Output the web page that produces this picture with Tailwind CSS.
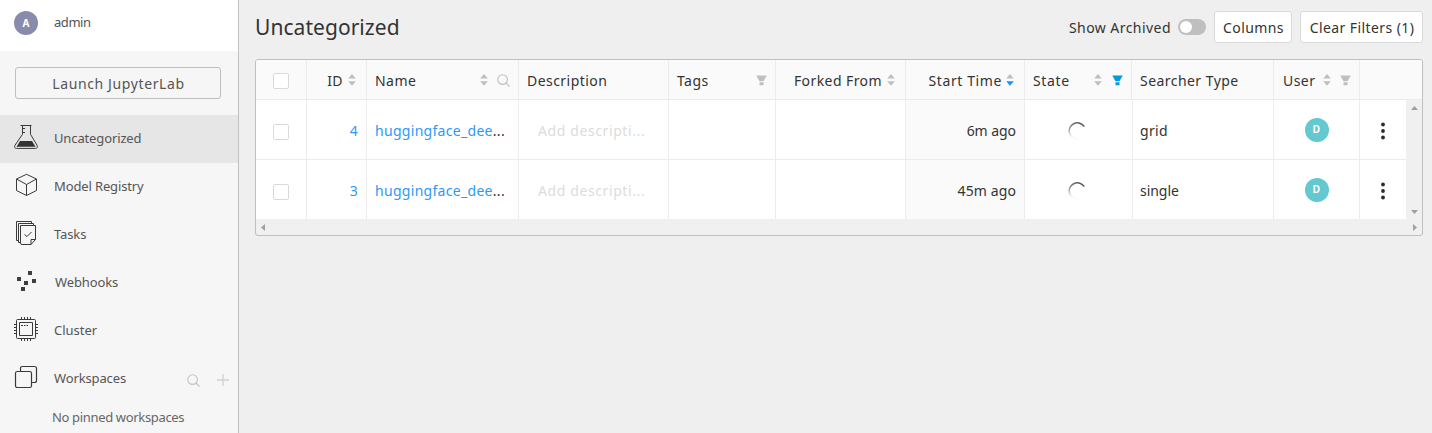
<!DOCTYPE html>
<html lang="en">
<head>
<meta charset="utf-8">
<title>Uncategorized</title>
<script src="https://cdn.jsdelivr.net/npm/@tailwindcss/browser@4"></script>
</head>
<body class="flex h-[433px] w-[1432px] overflow-hidden bg-[#efefef] font-['Noto_Sans',sans-serif] text-[14px] text-[#333]">
<svg class="hidden">
  <symbol id="sort" viewBox="0 0 8 12"><path d="M4 0 7.8 4.6H.2Z"/><path d="M4 11.8 7.8 7.2H.2Z"/></symbol>
  <symbol id="filter" viewBox="0 0 11 11"><path d="M.3.5h10.4L7.5 6.2h-4Z"/><path d="M3.5 7.2h4v3h-4z"/></symbol>
  <symbol id="search" viewBox="0 0 13 13"><g fill="none" stroke="currentColor" stroke-width="1.1"><circle cx="5.6" cy="5.6" r="4.8"/><path d="m9 9 3.5 3.5"/></g></symbol>
</svg>
<aside class="flex w-[239px] shrink-0 flex-col border-r border-[#c0c0c0] bg-[#f6f6f6] text-[13px] tracking-[-.13px] text-[#555]">
  <div class="flex h-[51px] shrink-0 items-center bg-white pb-[5px] pl-[14px]">
    <span class="flex size-6 items-center justify-center rounded-full bg-[#888bab] font-[Inter,sans-serif] text-[10px] font-bold text-white">A</span>
    <span class="ml-4 tracking-[-.45px]">admin</span>
  </div>
  <div class="h-16 shrink-0 pt-4 pl-[15px]">
    <div class="flex h-8 w-[206px] items-center justify-center rounded-[3px] border border-[#bfbfbf] pl-px text-[14px] tracking-[.62px]">Launch JupyterLab</div>
  </div>
  <nav class="flex flex-col">
    <div class="flex h-12 items-center gap-4 bg-[#e6e6e6] pl-[14px]">
      <svg class="mb-1 size-6" viewBox="0 0 24 24" fill="none" stroke="#3a3a3a"><path d="M6.500.5h11M8.500.8v8.500L1 20.200Q-.3 23.400 2.500 23.400h19q2.800 0 1.500-3.200L16.500 9.300V.8M8.500 3.500h2.500M8.500 7.500h2.500"/><path fill="#333" stroke="none" d="M6 16h12l3.500 5.800h-19Z"/></svg>
      <span>Uncategorized</span>
    </div>
    <div class="flex h-12 items-center gap-4 pl-[14px]">
      <svg class="mb-1 size-6" viewBox="0 0 24 24" fill="none" stroke="#3a3a3a" stroke-linejoin="round"><path d="M12.500 1.300 22.500 6v11.500l-10 5-10-5V6ZM2.500 6l10 5.500L22.500 6M12.500 11.500v11"/></svg>
      <span>Model Registry</span>
    </div>
    <div class="flex h-12 items-center gap-4 pl-[14px]">
      <svg class="mb-1 size-6" viewBox="0 0 24 24" fill="none" stroke="#3a3a3a"><path d="M6.500 4.500h15v14l-4.500 5H8q-1.500 0-1.500-1.500ZM21.500 18.500H17v5M4.500 21.500V2.500h15v2M2.500 19.500V.5h15v2M2.500 19.500h2M4.500 21.500h2"/><path d="m10.500 13.500 2.500 2 4.500-4.500"/></svg>
      <span>Tasks</span>
    </div>
    <div class="flex h-12 items-center gap-[17px] pl-[14px]">
      <svg class="mb-1 size-6" viewBox="0 0 24 24" fill="#3f3f3f"><path d="M14 2h4v4h-4zM3 8h4v4H3zM18 10h4v4h-4zM10 12h4v4h-4zM7 18h4v4H7z"/></svg>
      <span>Webhooks</span>
    </div>
    <div class="flex h-12 items-center gap-4 pl-[14px]">
      <svg class="mb-1 size-6" viewBox="0 0 24 24" fill="none" stroke="#3a3a3a"><path d="M3.500 2.500h17q1 0 1 1v17q0 1-1 1h-17q-1 0-1-1v-17q0-1 1-1ZM5.500 5.500h13v13h-13z"/><path d="M7.500 0v2.500M10.500 0v2.500M13.500 0v2.500M16.500 0v2.500M7.500 21.500V24M10.500 21.500V24M13.500 21.500V24M16.500 21.500V24M0 7.500h2.500M0 10.500h2.500M0 13.500h2.500M0 16.500h2.500M21.500 7.500H24M21.500 10.500H24M21.500 13.500H24M21.500 16.500H24"/><path d="M7 8.500h2M10 8.500h1.500M12.500 8.500h1.500"/></svg>
      <span class="tracking-normal">Cluster</span>
    </div>
    <div class="flex h-12 items-center pl-[14px]">
      <svg class="mr-4 mb-1 size-6" viewBox="0 0 24 24" fill="none" stroke="#3a3a3a" stroke-width="1.200"><rect x="1.500" y="6.500" width="16" height="16" rx="1.800"/><path d="M6.500 6.500v-3q0-2 2-2h12q2 0 2 2v12q0 2-2 2h-3"/></svg>
      <span>Workspaces</span>
      <svg class="mt-0.5 ml-auto size-[13px] text-[#c4c4c4]"><use href="#search"/></svg>
      <svg class="mt-0.5 mr-[9px] ml-[17px] size-3" viewBox="0 0 12 12" stroke="#d3d0cd" stroke-width="1.300"><path d="M0 6h12M6 0v12"/></svg>
    </div>
    <div class="pt-[5px] pl-[52px] tracking-[-.34px] text-[#666]">No pinned workspaces</div>
  </nav>
</aside>
<main class="flex w-[1193px] flex-col pl-4">
  <header class="flex h-[59px] items-center pr-[9px] pb-[5px] tracking-[.5px]">
    <h1 class="pt-px text-[21px] tracking-[.05px]">Uncategorized</h1>
    <span class="ml-auto tracking-[.45px]">Show Archived</span>
    <span class="ml-[7px] flex h-4 w-7 items-center rounded-full bg-[#bfbfbf] pl-0.5"><span class="size-3 rounded-full bg-white"></span></span>
    <span class="ml-2 flex h-8 w-[78px] items-center justify-center rounded-[3px] border border-[#d9d9d9] bg-white pl-px tracking-[.4px]">Columns</span>
    <span class="ml-2 flex h-8 w-[123px] items-center justify-center rounded-[3px] border border-[#d9d9d9] bg-white pl-px tracking-[.42px]">Clear Filters (1)</span>
  </header>
  <section class="h-[177px] w-[1168px] overflow-hidden rounded-[3px] border border-[#bfbfbf] bg-[#f0f0f0] tracking-[.3px]">
    <div class="grid h-10 grid-cols-[51px_60px_152px_150px_107px_130px_119px_107px_142px_86px_62px] border-b border-[#ececec] bg-[#fafafa] tracking-[.45px] *:flex *:items-center *:border-r *:border-[#ececec] *:px-2 *:pt-px">
      <div class="justify-center"><span class="mt-0.5 size-4 rounded-[2px] border border-[#d9d9d9] bg-white"></span></div>
      <div class="justify-end pr-[10px]!"><span>ID</span><svg class="ml-[5px] h-3 w-2 fill-[#bfbfbf]"><use href="#sort"/></svg></div>
      <div><span>Name</span><svg class="ml-auto h-3 w-2 fill-[#bfbfbf]"><use href="#sort"/></svg><svg class="ml-[9px] size-[13px] text-[#bfbfbf]"><use href="#search"/></svg></div>
      <div>Description</div>
      <div><span>Tags</span><svg class="ml-auto size-[11px] fill-[#bfbfbf]"><use href="#filter"/></svg></div>
      <div class="justify-end pr-[10px]!"><span class="tracking-[.42px]">Forked From</span><svg class="ml-[5px] h-3 w-2 fill-[#bfbfbf]"><use href="#sort"/></svg></div>
      <div class="justify-end pr-[10px]!"><span class="tracking-[.6px]">Start Time</span><svg class="ml-[4px] h-3 w-2" viewBox="0 0 8 12"><path fill="#bfbfbf" d="M4 0 7.800 4.600H.2Z"/><path fill="#1890ff" d="M4 11.800 7.800 7.200H.2Z"/></svg></div>
      <div><span class="tracking-[.65px]">State</span><svg class="ml-auto h-3 w-2 fill-[#bfbfbf]"><use href="#sort"/></svg><svg class="ml-[10px] size-[11px] fill-[#009bde]"><use href="#filter"/></svg></div>
      <div>Searcher Type</div>
      <div><span class="pl-px">User</span><svg class="ml-auto h-3 w-2 fill-[#bfbfbf]"><use href="#sort"/></svg><svg class="ml-[9px] size-[11px] fill-[#bfbfbf]"><use href="#filter"/></svg></div>
      <div class="border-r-0!"></div>
    </div>
    <div class="flex h-[119px]">
      <div class="w-[1150px] shrink-0 bg-white">
        <div class="grid h-[60px] grid-cols-[51px_60px_152px_150px_107px_130px_119px_108px_141px_86px_46px] border-b border-[#ececec] *:flex *:items-center *:border-r *:border-[#ececec] *:px-2 *:pt-px">
          <div class="justify-center"><span class="mt-1 size-4 rounded-[2px] border border-[#d9d9d9]"></span></div>
          <div class="justify-end text-[#2e98fa]">4</div>
          <div><span class="text-[#2e98fa]">huggingface_dee</span>...</div>
          <div><span class="pl-[11px] tracking-[.6px] text-[#dcdcdc]">Add descripti...</span></div>
          <div></div><div></div>
          <div class="justify-end bg-[#fafafa] tracking-[-.05px]">6m ago</div>
          <div class="justify-center"><svg class="mt-px mr-1 size-[18px]" viewBox="0 0 18 18" fill="none" stroke-width="1.600"><defs><linearGradient id="fade" gradientUnits="userSpaceOnUse" x1="16" y1="2" x2="10" y2="18"><stop stop-color="#555"/><stop offset=".65" stop-color="#b0b0b0"/><stop offset="1" stop-color="#fff"/></linearGradient></defs><path stroke="url(#fade)" d="M16.300 4.600A8.200 8.200 0 1 0 10 17.200"/></svg></div>
          <div class="pl-[7px]!"><span>grid</span></div>
          <div class="justify-center"><span class="mb-px flex size-6 items-center justify-center rounded-full bg-[#63c8cf] font-[Inter,sans-serif] text-[10px] font-bold text-white">D</span></div>
          <div class="justify-center border-r-0!"><svg class="mt-0.5 h-[18px] w-1 fill-[#2b2b2b]" viewBox="0 0 4 18"><circle cx="2" cy="2.500" r="1.900"/><circle cx="2" cy="9" r="1.900"/><circle cx="2" cy="15.500" r="1.900"/></svg></div>
        </div>
        <div class="grid h-[59px] grid-cols-[51px_60px_152px_150px_107px_130px_119px_108px_141px_86px_46px] *:flex *:items-center *:border-r *:border-[#ececec] *:px-2 *:pt-px">
          <div class="justify-center"><span class="mt-1 size-4 rounded-[2px] border border-[#d9d9d9]"></span></div>
          <div class="justify-end text-[#2e98fa]">3</div>
          <div><span class="text-[#2e98fa]">huggingface_dee</span>...</div>
          <div><span class="pl-[11px] tracking-[.6px] text-[#dcdcdc]">Add descripti...</span></div>
          <div></div><div></div>
          <div class="justify-end bg-[#fafafa] tracking-[.1px]">45m ago</div>
          <div class="justify-center"><svg class="mt-px mr-1 size-[18px]" viewBox="0 0 18 18" fill="none" stroke-width="1.600"><path stroke="url(#fade)" d="M16.300 4.600A8.200 8.200 0 1 0 10 17.200"/></svg></div>
          <div class="pl-[7px]! tracking-[-.05px]"><span>single</span></div>
          <div class="justify-center"><span class="mb-px flex size-6 items-center justify-center rounded-full bg-[#63c8cf] font-[Inter,sans-serif] text-[10px] font-bold text-white">D</span></div>
          <div class="justify-center border-r-0!"><svg class="mt-0.5 h-[18px] w-1 fill-[#2b2b2b]" viewBox="0 0 4 18"><circle cx="2" cy="2.500" r="1.900"/><circle cx="2" cy="9" r="1.900"/><circle cx="2" cy="15.500" r="1.900"/></svg></div>
        </div>
      </div>
      <div class="flex flex-1 flex-col items-center justify-between pt-[6px] pb-[5px]">
        <svg class="h-1 w-[7px] fill-[#a0a0a0]" viewBox="0 0 7 4"><path d="M3.500 0 7 4H0Z"/></svg>
        <svg class="h-1 w-[7px] fill-[#a0a0a0]" viewBox="0 0 7 4"><path d="M0 0h7L3.500 4Z"/></svg>
      </div>
    </div>
    <div class="flex h-4 items-center justify-between pr-[5px] pl-[5px]">
      <svg class="h-[7px] w-1 fill-[#a0a0a0]" viewBox="0 0 4 7"><path d="M4 0v7L0 3.500Z"/></svg>
      <svg class="h-[7px] w-1 fill-[#a0a0a0]" viewBox="0 0 4 7"><path d="M0 0v7l4-3.500Z"/></svg>
    </div>
  </section>
</main>
</body>
</html>
